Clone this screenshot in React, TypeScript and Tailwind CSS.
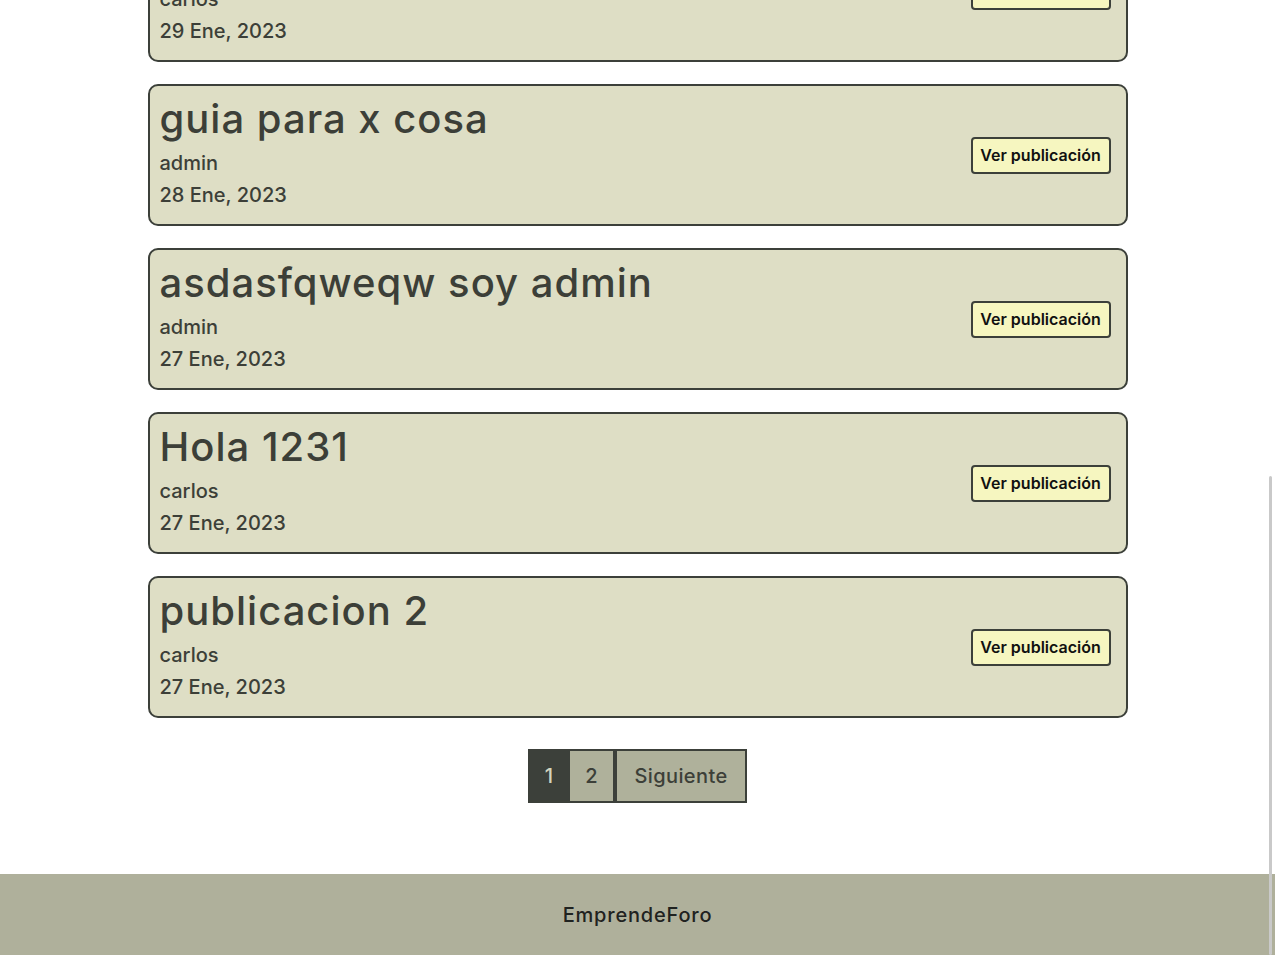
import React from "react";

type Post = {
  title: string;
  author: string;
  date: string;
};

const posts: Post[] = [
  { title: "prueba de publicacion", author: "carlos", date: "29 Ene, 2023" },
  { title: "guia para x cosa", author: "admin", date: "28 Ene, 2023" },
  { title: "asdasfqweqw soy admin", author: "admin", date: "27 Ene, 2023" },
  { title: "Hola 1231", author: "carlos", date: "27 Ene, 2023" },
  { title: "publicacion 2", author: "carlos", date: "27 Ene, 2023" },
];

function PostCard({ post }: { post: Post }) {
  return (
    <div className="flex h-[142px] items-center justify-between rounded-[10px] border-2 border-[#3c403a] bg-[#dedec5] pl-[10px] pr-[15px]">
      <div className="flex h-full flex-col pt-[9px] text-[#3c3f38]">
        <h2 className="text-[40px] font-medium leading-[48px] tracking-[0.025em]">{post.title}</h2>
        <p className="mt-[4px] text-[20px] font-medium leading-[32px]">{post.author}</p>
        <p className="text-[20px] font-medium leading-[32px]">{post.date}</p>
      </div>
      <button
        type="button"
        className="h-[37px] w-[140px] rounded-[4px] border-2 border-[#3c403a] bg-[#f6f6c0] text-[16px] font-semibold text-[#111]"
      >
        Ver publicación
      </button>
    </div>
  );
}

export default function App() {
  return (
    <div className="min-h-[955px] bg-white pt-px font-['Inter','Liberation_Sans',sans-serif]">
      <main className="mx-auto -mt-[81px] flex w-[980px] flex-col gap-[22px]">
        {posts.map((post) => (
          <PostCard key={post.title} post={post} />
        ))}
      </main>

      <nav className="mt-[31px] flex justify-center">
        <div className="flex h-[54px] text-[20px] font-medium">
          <button
            type="button"
            className="w-[42px] border-2 border-[#3c403a] bg-[#3c403a] text-[#d3d4bd]"
          >
            1
          </button>
          <button
            type="button"
            className="w-[45px] border-2 border-l-0 border-[#3c403a] bg-[#afb19b] text-[#3c3f38]"
          >
            2
          </button>
          <button
            type="button"
            className="w-[132px] border-2 border-[#3c403a] bg-[#afb19b] tracking-[0.02em] text-[#3c3f38]"
          >
            Siguiente
          </button>
        </div>
      </nav>

      <footer className="mt-[71px] flex h-[81px] items-center justify-center bg-[#afb09b]">
        <span className="text-[20px] font-medium tracking-[0.04em] text-[#1f2220]">EmprendeForo</span>
      </footer>

      <div className="fixed bottom-0 right-[3px] top-[476px] w-[3px] rounded-full bg-[#c9c9c9]" />
    </div>
  );
}
